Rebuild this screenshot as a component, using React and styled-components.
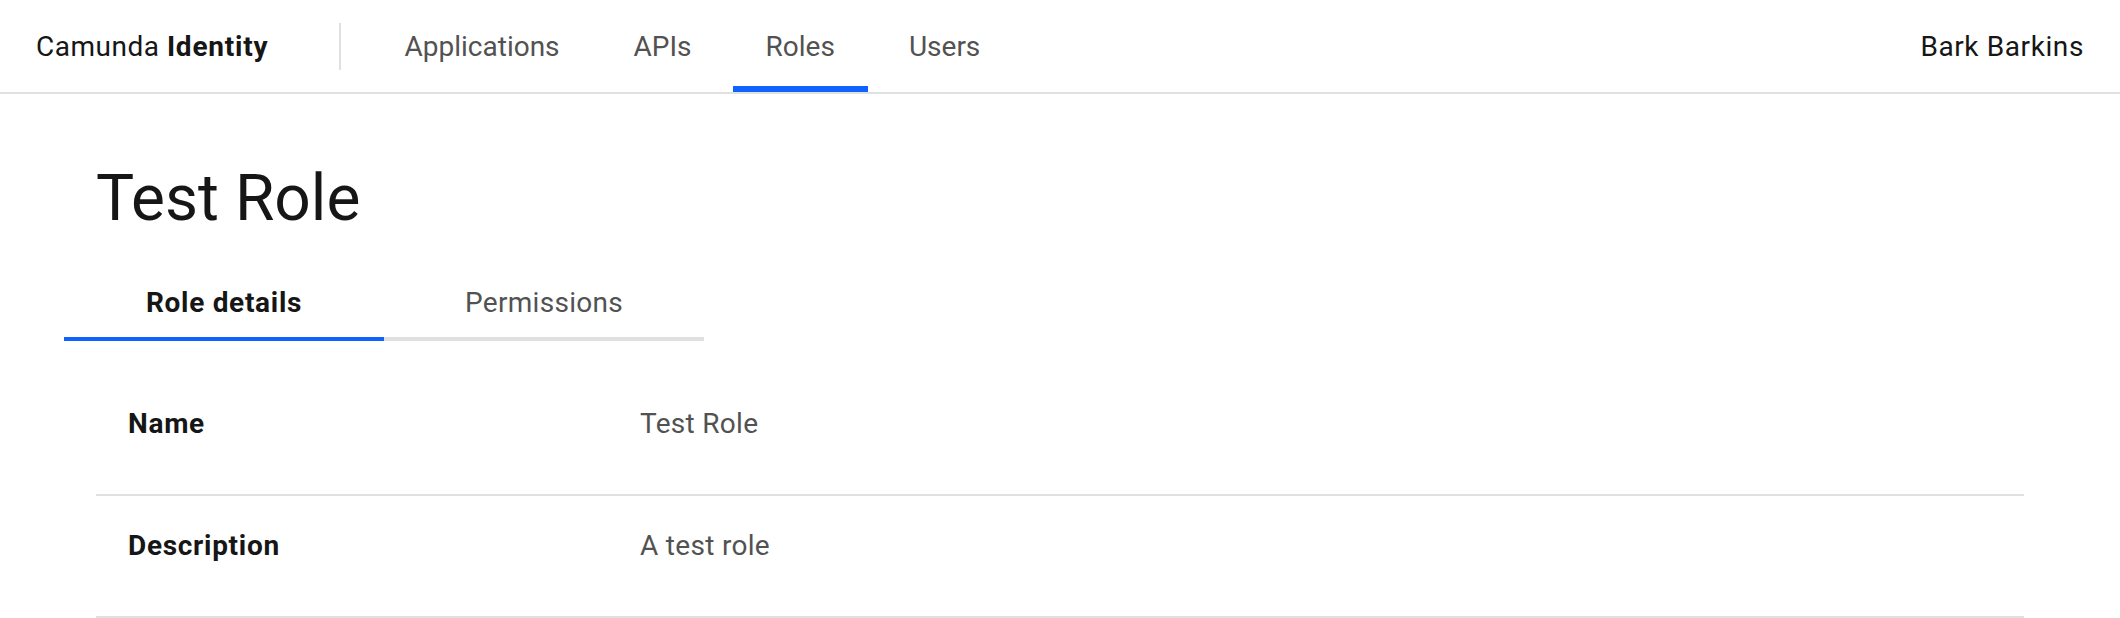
import React from "react";
import styled, { createGlobalStyle } from "styled-components";

const GlobalStyle = createGlobalStyle`
  body {
    margin: 0;
    background: #ffffff;
    font-family: Roboto, "Noto Sans", "Liberation Sans", sans-serif;
    color: #161616;
  }
`;

const Header = styled.header`
  display: flex;
  align-items: center;
  height: 92px;
  border-bottom: 2px solid #e0e0e0;
  padding: 0 36px;
`;

const Brand = styled.div`
  font-size: 28px;
  letter-spacing: 0.5px;
  padding-right: 70px;
  white-space: nowrap;

  strong {
    font-weight: 700;
    letter-spacing: 0.8px;
  }
`;

const Divider = styled.div`
  width: 2px;
  height: 47px;
  background: #e0e0e0;
`;

const Nav = styled.nav`
  display: flex;
  align-self: stretch;
  gap: 8px;
  margin-left: 31px;
`;

const NavItem = styled.a`
  display: flex;
  align-items: center;
  padding: 0 33px;
  font-size: 28px;
  color: #525252;
  text-decoration: none;
  box-shadow: ${(p) => (p.$active ? "inset 0 -6px 0 #0f62fe" : "none")};
`;

const User = styled.div`
  margin-left: auto;
  font-size: 28px;
  letter-spacing: 0.6px;
  color: #161616;
`;

const Main = styled.main`
  padding: 65px 96px 0;
`;

const Title = styled.h1`
  margin: 0 0 30px;
  font-size: 64px;
  font-weight: 400;
  line-height: 80px;
`;

const TabList = styled.div`
  display: flex;
  margin-left: -32px;
`;

const Tab = styled.button`
  width: 320px;
  padding: 14px 0;
  border: 0;
  border-bottom: 4px solid ${(p) => (p.$active ? "#0f62fe" : "#e0e0e0")};
  background: none;
  font-family: inherit;
  font-size: 28px;
  line-height: 40px;
  font-weight: ${(p) => (p.$active ? 700 : 400)};
  letter-spacing: ${(p) => (p.$active ? "0.7px" : "0.3px")};
  color: ${(p) => (p.$active ? "#161616" : "#525252")};
  text-align: center;
`;

const List = styled.div`
  margin-top: 33px;
`;

const Row = styled.div`
  display: grid;
  grid-template-columns: 512px 1fr;
  border-bottom: 2px solid #e0e0e0;
`;

const Cell = styled.div`
  padding: 30px 32px 50px;
  font-size: 28px;
  line-height: 40px;
  font-weight: ${(p) => (p.$head ? 700 : 400)};
  letter-spacing: ${(p) => (p.$head ? "0.7px" : "0.3px")};
  color: ${(p) => (p.$head ? "#161616" : "#525252")};
`;

const details = [
  { label: "Name", value: "Test Role" },
  { label: "Description", value: "A test role" },
];

export default function App() {
  return (
    <>
      <GlobalStyle />
      <Header>
        <Brand>
          Camunda <strong>Identity</strong>
        </Brand>
        <Divider />
        <Nav>
          <NavItem>Applications</NavItem>
          <NavItem>APIs</NavItem>
          <NavItem $active>Roles</NavItem>
          <NavItem>Users</NavItem>
        </Nav>
        <User>Bark Barkins</User>
      </Header>
      <Main>
        <Title>Test Role</Title>
        <TabList>
          <Tab $active>Role details</Tab>
          <Tab>Permissions</Tab>
        </TabList>
        <List>
          {details.map((d) => (
            <Row key={d.label}>
              <Cell $head>{d.label}</Cell>
              <Cell>{d.value}</Cell>
            </Row>
          ))}
        </List>
      </Main>
    </>
  );
}
